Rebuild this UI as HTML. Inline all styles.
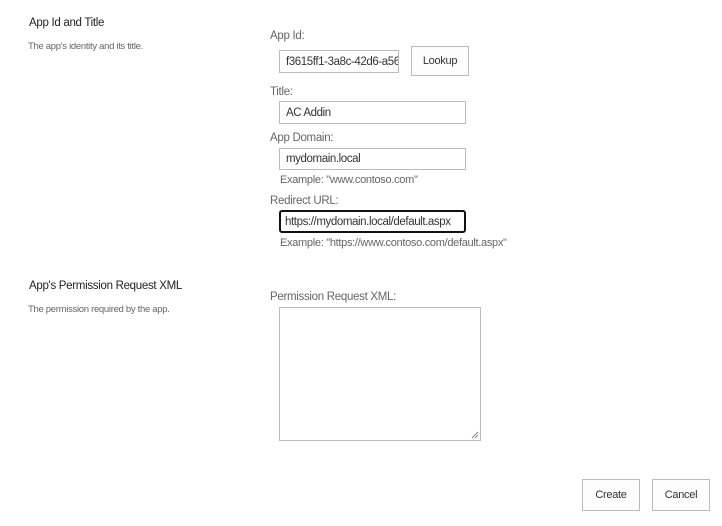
<!DOCTYPE html>
<html><head><style>
body{margin:0;width:722px;height:526px;background:#fff;font-family:"Liberation Sans",sans-serif;position:relative;overflow:hidden}
.a{position:absolute;white-space:nowrap}
.h{font-size:11.5px;color:#222;letter-spacing:-0.3px}
.d{font-size:9.5px;color:#666;letter-spacing:-0.3px}
.l{font-size:11.5px;color:#666;letter-spacing:-0.3px}
.in{position:absolute;border:1px solid #bbb;box-sizing:border-box;font-size:11.5px;color:#333;padding-left:6px;letter-spacing:-0.4px;white-space:nowrap;overflow:hidden}
.b{position:absolute;border:1px solid #bbb;background:#fdfdfd;box-sizing:border-box;font-size:11px;color:#333;text-align:center;letter-spacing:-0.3px}
</style></head><body>
<div class="a h" style="left:29px;top:17px">App Id and Title</div>
<div class="a d" style="left:28px;top:41px">The app's identity and its title.</div>
<div class="a l" style="left:270px;top:30px">App Id:</div>
<div class="in" style="left:279px;top:50px;width:120px;height:23px;line-height:22px">f3615ff1-3a8c-42d6-a56</div>
<div class="b" style="left:411px;top:46px;width:58px;height:30px;line-height:29px">Lookup</div>
<div class="a l" style="left:270px;top:86px">Title:</div>
<div class="in" style="left:279px;top:101px;width:187px;height:23px;line-height:22px">AC Addin</div>
<div class="a l" style="left:270px;top:132px">App Domain:</div>
<div class="in" style="left:279px;top:148px;width:187px;height:22px;line-height:21px">mydomain.local</div>
<div class="a l" style="left:280px;top:174px;font-size:11px">Example: "www.contoso.com"</div>
<div class="a l" style="left:270px;top:195px">Redirect URL:</div>
<div class="in" style="left:279px;top:210px;width:187px;height:23px;line-height:20px;border:2px solid #111;border-radius:3px;padding-left:4px">https://mydomain.local/default.aspx</div>
<div class="a l" style="left:280px;top:237px;font-size:11px">Example: "https://www.contoso.com/default.aspx"</div>
<div class="a h" style="left:29px;top:280px">App's Permission Request XML</div>
<div class="a d" style="left:28px;top:304px">The permission required by the app.</div>
<div class="a l" style="left:270px;top:291px">Permission Request XML:</div>
<div class="in" style="left:279px;top:307px;width:202px;height:134px">
<svg style="position:absolute;right:1px;bottom:1px" width="8" height="8"><path d="M7 1L1 7M7 4L4 7" stroke="#888" stroke-width="1"/></svg></div>
<div class="b" style="left:582px;top:479px;width:58px;height:32px;line-height:31px">Create</div>
<div class="b" style="left:652px;top:479px;width:58px;height:32px;line-height:31px">Cancel</div>
</body></html>
